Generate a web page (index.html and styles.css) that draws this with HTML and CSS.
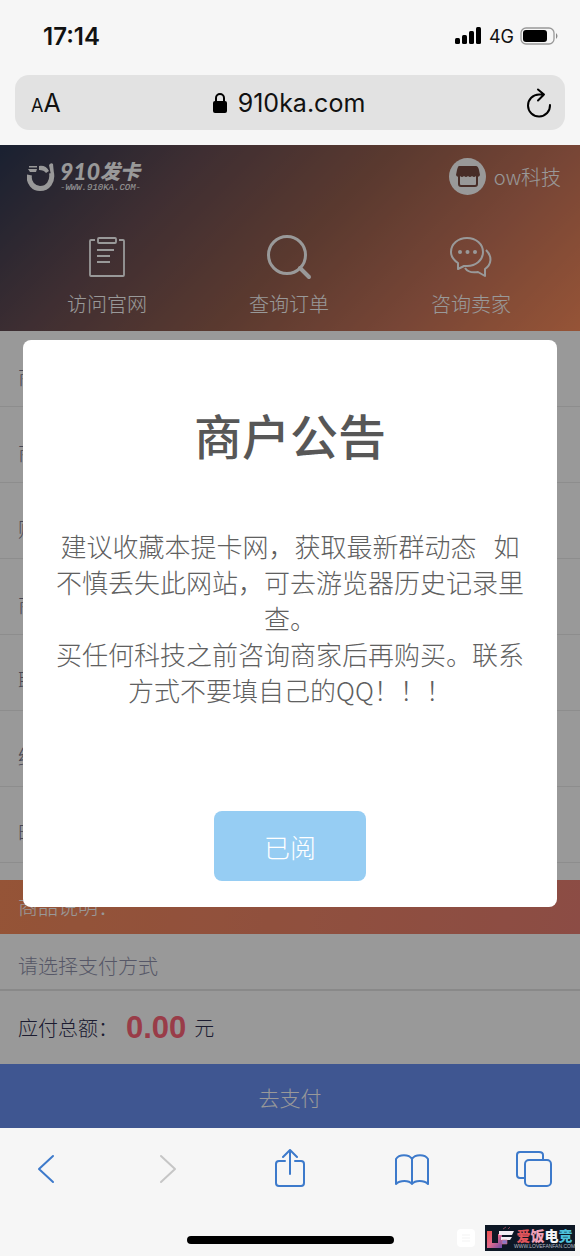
FILE: index.html
```html
<!DOCTYPE html>
<html lang="zh-CN">
<head>
<meta charset="utf-8">
<meta name="viewport" content="width=device-width, initial-scale=1">
<title>910发卡</title>
<link rel="stylesheet" href="styles.css">
</head>
<body>
<div class="phone">
  <header class="chrome">
    <div class="status">
      <span class="time">17:14</span>
      <div class="signals">
        <svg width="28" height="18" viewBox="0 0 28 18" aria-hidden="true"><rect x="0" y="11" width="5" height="6" rx="1.5"/><rect x="7" y="8" width="5" height="9" rx="1.5"/><rect x="14" y="4" width="5" height="13" rx="1.5"/><rect x="21" y="0" width="5" height="17" rx="1.5"/></svg>
        <span class="network">4G</span>
        <svg width="38" height="18" viewBox="0 0 38 18" aria-hidden="true"><rect x="1" y="1" width="33" height="16" rx="5" fill="none" stroke="#999" stroke-width="1.3"/><rect x="3" y="3" width="24" height="12" rx="3"/><path d="M36 6q3 3 0 6z" fill="#888"/></svg>
      </div>
    </div>
    <div class="address">
      <button class="text-size" type="button"><span class="small-a">A</span>A</button>
      <div class="site">
        <svg width="16" height="22" viewBox="0 0 16 22" aria-hidden="true"><rect x="1" y="9" width="14" height="12" rx="2"/><path d="M4 10V6a4 4 0 0 1 8 0v4" fill="none" stroke="#000" stroke-width="2"/></svg>
        <span>910ka.com</span>
      </div>
      <button class="reload" type="button" aria-label="Reload">
        <svg width="26" height="30" viewBox="0 0 26 30" fill="none" stroke="#000" stroke-width="2" stroke-linecap="round" stroke-linejoin="round" aria-hidden="true"><path d="M24 17A11 11 0 1 1 13 6.500h5M12 1.500l6 5-6 6"/></svg>
      </button>
    </div>
  </header>

  <main class="page">
    <div class="hero">
      <div class="hero-top">
        <div class="logo">
          <svg width="28" height="28" viewBox="0 0 28 28" aria-hidden="true"><path d="M2.500 12C1 20 7 25.500 13 25.500c8 0 13-7 11.500-15.500" fill="none" stroke="#fff" stroke-width="5"/><path d="M12 3q7-1 10 5l-3 2q-2-3-7-3z" fill="#fff"/><path d="M22 2q2-3 4-1l1 10-3 1z" fill="#fff"/><path d="M2 3h8v1.500H2zM1 6h9l-1 3H3z" fill="#fff"/></svg>
          <div class="logo-words">
            <span class="logo-name">910<b>发卡</b></span>
            <span class="logo-url">-WWW.910KA.COM-</span>
          </div>
        </div>
        <div class="shop">
          <svg width="37" height="37" viewBox="0 0 37 37" aria-hidden="true"><circle cx="18.500" cy="18.500" r="18.500" fill="#fff"/><path d="M10 8h17q2 0 3 4l1 5q-1 3-4 1-2 2-4 0-2 2-4 0-2 2-4 0-2 2-4 0-3 2-4-1l1-5q1-4 2-4z" fill="#794c42"/><path d="M10 17v9q0 2 2 2h14q2 0 2-2v-9" fill="none" stroke="#794c42" stroke-width="2"/></svg>
          <span>ow科技</span>
        </div>
      </div>
      <nav class="hero-nav">
        <a href="#site"><svg width="46" height="46" viewBox="0 0 46 46" fill="none" stroke="#fff" stroke-width="1.800" aria-hidden="true"><path d="M11 5H7q-1 0-1 1v34q0 1 1 1h32q1 0 1-1V6q0-1-1-1h-4"/><rect x="14" y="3" width="18" height="5" rx="1"/><path d="M13 15h17M13 21h13M13 27h13"/></svg><span>访问官网</span></a>
        <a href="#order"><svg width="46" height="46" viewBox="0 0 46 46" fill="none" stroke="#fff" stroke-width="3" aria-hidden="true"><circle cx="21" cy="20" r="18.500"/><path d="M34 33l9 9" stroke-width="4" stroke-linecap="round"/></svg><span>查询订单</span></a>
        <a href="#chat"><svg width="46" height="46" viewBox="0 0 46 46" fill="none" stroke="#fff" stroke-width="2" stroke-linejoin="round" aria-hidden="true"><path d="M10 34v-6C4 24 3 19 3 17 3 9 10 3 19 3s16 6 16 14-7 14-16 14h-3z"/><path d="M38 15c7 7 5 15-1 19v7l-7-4c-6 1-11-1-13-4"/><g fill="#fff" stroke="none"><circle cx="12" cy="17" r="2"/><circle cx="19.500" cy="17" r="2"/><circle cx="27" cy="17" r="2"/></g></svg><span>咨询卖家</span></a>
      </nav>
    </div>

    <form class="order">
      <div class="fields">
        <div class="field">商</div>
        <div class="field">商</div>
        <div class="field">购</div>
        <div class="field">商</div>
        <div class="field">联</div>
        <div class="field">结</div>
        <div class="field">时</div>
      </div>
      <div class="description">商品说明：</div>
      <select class="method" aria-label="支付方式"><option>请选择支付方式</option></select>
      <div class="total"><span>应付总额：</span><strong>0.00</strong><span>元</span></div>
      <button class="pay" type="button">去支付</button>
    </form>

    <div class="overlay">
      <section class="dialog" role="dialog" aria-labelledby="notice-title">
        <h1 class="dialog-title" id="notice-title">商户公告</h1>
        <p class="dialog-text">建议收藏本提卡网，获取最新群动态&nbsp;&nbsp; 如不慎丢失此网站，可去游览器历史记录里查。<br>买任何科技之前咨询商家后再购买。联系方式不要填自己的QQ！！！</p>
        <button class="confirm" type="button">已阅</button>
      </section>
    </div>
  </main>

  <footer class="toolbar">
    <div class="tools">
      <button type="button" aria-label="Back"><svg width="40" height="40" viewBox="0 0 40 40"><path d="M27 7L13 20l14 13"/></svg></button>
      <button class="disabled" type="button" aria-label="Forward" disabled><svg width="40" height="40" viewBox="0 0 40 40"><path d="M13 7l14 13-14 13"/></svg></button>
      <button type="button" aria-label="Share"><svg width="40" height="40" viewBox="0 0 40 40"><path d="M15 12H9q-3 0-3 3v19q0 3 3 3h22q3 0 3-3V15q0-3-3-3h-6M20 25V2M13 8l7-7 7 7"/></svg></button>
      <button type="button" aria-label="Bookmarks"><svg width="40" height="40" viewBox="0 0 40 40"><path d="M20 10c-3-5-13-5-16 0v25c4-4 13-4 16 0 3-4 12-4 16 0V10c-3-5-13-5-16 0zv25"/></svg></button>
      <button type="button" aria-label="Tabs"><svg width="40" height="40" viewBox="0 0 40 40"><path d="M11 29H6q-3 0-3-3V6q0-3 3-3h19q4 0 4 3v5"/><rect x="11" y="11" width="26" height="26" rx="4"/></svg></button>
    </div>
    <div class="home-bar"></div>
    <div class="watermark">
      <svg class="mark-app" width="20" height="20" viewBox="0 0 20 20" aria-hidden="true"><rect x="1" y="1" width="18" height="18" rx="4" fill="#fff"/><path d="M6 7h8M6 10h8M6 13h8" stroke="#f3f3f3"/></svg>
      <div class="mark">
        <svg width="28" height="24" viewBox="0 0 28 24" aria-hidden="true"><defs><linearGradient id="lf" x2="1" y2="1"><stop stop-color="#f0504b"/><stop offset=".5" stop-color="#e06a8c"/><stop offset="1" stop-color="#6a4aa8"/></linearGradient></defs><path d="M1 5h5v12h6V8h4v14H1z" fill="url(#lf)"/><path d="M13 5h15l-2 4H13zM15 11h11l-2 3h-9z" fill="#f4eef4"/><path d="M16 14h5v4h-5zM17 3l3-2M22 3l2-2" fill="#8a78c8" stroke="#d86a7a" stroke-width=".6"/></svg>
        <div class="mark-words">
          <span class="mark-name"><i class="c1">爱</i><i class="c2">饭</i><i class="c3">电</i><i class="c4">竞</i></span>
          <span class="mark-url">WWW.LOVEFANFAN.COM</span>
        </div>
      </div>
    </div>
  </footer>
</div>
</body>
</html>
```
FILE: styles.css
```css
* { box-sizing: border-box; }
body {
  margin: 0;
  font-family: "Noto Sans CJK SC", sans-serif;
  background: #f6f6f6;
}
button {
  margin: 0;
  padding: 0;
  border: 0;
  background: none;
  font: inherit;
  color: inherit;
}
svg { display: block; flex: none; }
.phone { display: flex; flex-direction: column; min-height: 100vh; }

/* browser chrome */
.chrome {
  padding: 20px 15px 15px;
  font-family: Inter, "Liberation Sans", sans-serif;
  color: #111;
}
.status {
  display: flex;
  align-items: center;
  justify-content: space-between;
  height: 32px;
  padding: 0 7px 0 28px;
}
.time { font-size: 24px; font-weight: 600; }
.signals { display: flex; align-items: center; gap: 6px; }
.network { font-size: 18px; }
.address {
  display: flex;
  align-items: center;
  justify-content: space-between;
  height: 55px;
  margin-top: 23px;
  padding: 0 13px 0 16px;
  border-radius: 14px;
  background: #e2e2e2;
}
.text-size { width: 32px; font-size: 25px; text-align: left; white-space: nowrap; }
.small-a { font-size: 18px; }
.site { display: flex; align-items: center; gap: 10px; font-size: 25px; }
.reload { display: flex; justify-content: flex-end; width: 38px; }

/* shop page */
.page { position: relative; flex: 1; display: flex; flex-direction: column; background: #fff; }
.hero {
  padding: 13px 18px 12px 16px;
  color: #fff;
  background: linear-gradient(135deg, #2b3752 0%, #6a4e54 28%, #96604f 52%, #c6745a 75%, #fa8c5c 100%);
}
.hero-top { display: flex; align-items: center; justify-content: space-between; padding: 0 1px 0 11px; }
.logo { display: flex; align-items: center; gap: 5px; }
.logo-words { display: flex; flex-direction: column; gap: 2px; }
.logo-name {
  display: flex;
  align-items: center;
  font: italic 900 23px/20px Lato, "Noto Sans CJK SC", sans-serif;
}
.logo-name b { font: italic 900 20px/20px "Noto Sans CJK SC", sans-serif; }
.logo-url { font: italic 9px/10px "Liberation Mono", monospace; }
.shop { display: flex; align-items: center; gap: 8px; font-size: 20px; font-weight: 300; line-height: 30px; }
.hero-nav { display: grid; grid-template-columns: repeat(3, 1fr); margin-top: 40px; }
.hero-nav a {
  display: flex;
  flex-direction: column;
  align-items: center;
  gap: 8px;
  color: #fff;
  font-size: 20px;
  font-weight: 300;
  line-height: 30px;
  text-decoration: none;
}
.order { flex: 1; display: flex; flex-direction: column; }
.field {
  height: 76px;
  padding: 0 18px;
  border-bottom: 1px solid #ececec;
  font-size: 20px;
  font-weight: 300;
  line-height: 92px;
  color: #77778c;
}
.description {
  margin-top: 17px;
  padding: 0 18px;
  background: linear-gradient(100deg, #f88c5c, #e97f73);
  color: #fff;
  font-size: 20px;
  font-weight: 300;
  line-height: 54px;
}
.method {
  appearance: none;
  width: 100%;
  height: 57px;
  padding: 8px 18px 0;
  border: 0;
  border-bottom: 2px solid #e4e4e4;
  border-radius: 0;
  background: #fff;
  color: #9092ac;
  font: 300 20px "Noto Sans CJK SC", sans-serif;
}
.total {
  display: flex;
  flex: 1;
  align-items: center;
  gap: 8px;
  min-height: 73px;
  padding: 0 18px;
  color: #2d2d50;
  font-size: 20px;
  font-weight: 300;
}
.total strong { font: 700 31px "Liberation Sans", sans-serif; color: #ff6478; }
.pay {
  height: 64px;
  padding-top: 2px;
  background: #698ff2;
  color: #fff;
  font-size: 21px;
  font-weight: 300;
}

/* notice */
.overlay {
  position: absolute;
  inset: 0;
  padding: 195px 23px 0;
  background: rgba(0, 0, 0, .4);
}
.dialog {
  display: flex;
  flex-direction: column;
  align-items: center;
  padding: 66px 28px 26px;
  border-radius: 8px;
  background: #fff;
}
.dialog-title {
  margin: 0;
  color: #575757;
  font-size: 48px;
  font-weight: 500;
  line-height: 56px;
}
.dialog-text {
  margin: 66px 0 103px;
  color: #606060;
  font-size: 26px;
  font-weight: 300;
  line-height: 36px;
  text-align: center;
}
.confirm {
  width: 152px;
  height: 70px;
  border-radius: 8px;
  background: #96cdf3;
  color: #fff;
  font-size: 26px;
  font-weight: 300;
}

/* bottom toolbar */
.toolbar { position: relative; padding: 21px 26px 12px; }
.tools { display: flex; justify-content: space-between; }
.tools svg {
  fill: none;
  stroke: #3d7acb;
  stroke-width: 2;
  stroke-linecap: round;
  stroke-linejoin: round;
}
.tools .disabled svg { stroke: #c6c6c6; }
.home-bar {
  width: 207px;
  height: 8px;
  margin: 47px auto 0;
  border-radius: 4px;
  background: #000;
}
.watermark {
  position: absolute;
  right: 5px;
  bottom: 5px;
  display: flex;
  align-items: center;
  gap: 9px;
}
.mark {
  display: flex;
  align-items: center;
  width: 90px;
  height: 26px;
  padding-left: 1px;
  background: #0d1725;
}
.mark-words { display: flex; flex-direction: column; align-items: center; }
.mark-name { display: flex; font-size: 14px; line-height: 16px; font-weight: 900; }
.mark-name i { font-style: normal; }
.c1 { color: #e0555c; }
.c2 { color: #f0a0b8; }
.c3 { color: #f2f2f6; }
.c4 { color: #4cc0dc; }
.mark-url { font: 5px/6px "Liberation Sans", sans-serif; color: #b8bec8; }
```
